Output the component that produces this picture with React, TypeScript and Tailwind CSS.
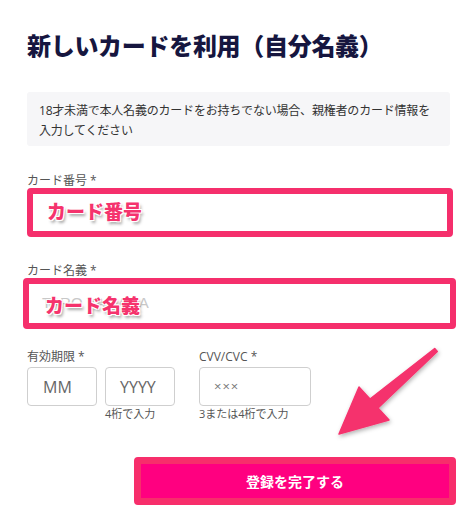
const App = () => {
  const annotation =
    'font-black text-[19px] leading-none text-[#f5336d] [text-shadow:1px_1px_0_#fff,-1px_-1px_0_#fff,1px_-1px_0_#fff,-1px_1px_0_#fff,2px_3px_3px_rgba(0,0,0,0.35)]';

  return (
    <div className="relative w-[472px] h-[515px] bg-white overflow-hidden font-['Open_Sans','Noto_Sans_CJK_JP',sans-serif]">
      <div className="pl-[27px] pr-[16px] pt-[28px]">
        {/* Title */}
        <h1 className="text-[24px] leading-[36px] font-black text-[#16163f] tracking-[-0.3px]">
          新しいカードを利用（自分名義）
        </h1>

        {/* Notice */}
        <div className="mt-[28px] w-[423px] bg-[#f6f6f8] rounded-[3px] pl-[12px] pr-[16px] pt-[9px] pb-[5px]">
          <p className="text-[12px] leading-[20px] text-[#333] tracking-[-0.2px]">
            18才未満で本人名義のカードをお持ちでない場合、親権者のカード情報を入力してください
          </p>
        </div>

        {/* Card number */}
        <p className="mt-[27px] text-[12px] leading-[15px] text-[#555]">カード番号 *</p>
        <div className="flex items-center w-[426px] h-[49px] border-[6px] border-[#f52f6c] rounded-[4px] bg-white pl-[14px]">
          <span className={annotation}>カード番号</span>
        </div>

        {/* Card holder */}
        <p className="mt-[26px] text-[12px] leading-[15px] text-[#555]">カード名義 *</p>
        <div className="relative flex items-center -ml-[4px] w-[433px] h-[51px] border-[6px] border-[#f52f6c] rounded-[4px] bg-white pl-[13px]">
          <span className="text-[15px] text-[#c8c8c8] font-['Liberation_Sans',sans-serif]">
            TARO YAMADA
          </span>
          <span className={`absolute left-[16px] top-[13px] ${annotation}`}>カード名義</span>
        </div>

        {/* Expiry / CVV */}
        <div className="mt-[20px] flex">
          <div className="w-[172px]">
            <p className="text-[12px] leading-[15px] text-[#555]">有効期限 *</p>
            <div className="mt-[3px] flex gap-[8px]">
              <div className="w-[70px] h-[39px] border border-[#cfcfcf] rounded-[4px] flex items-center pl-[15px] text-[16px] text-[#666]">
                MM
              </div>
              <div>
                <div className="w-[70px] h-[39px] border border-[#cfcfcf] rounded-[4px] flex items-center pl-[14px] text-[16px] text-[#666]">
                  YYYY
                </div>
                <p className="mt-[1px] text-[11px] leading-[14px] text-[#555]">4桁で入力</p>
              </div>
            </div>
          </div>
          <div>
            <p className="text-[12px] leading-[15px] text-[#555]">CVV/CVC *</p>
            <div className="mt-[3px] w-[112px] h-[39px] border border-[#cfcfcf] rounded-[4px] flex items-center pl-[14px] text-[13px] text-[#777] tracking-[1px]">
              ×××
            </div>
            <p className="mt-[1px] text-[11px] leading-[14px] text-[#555]">3または4桁で入力</p>
          </div>
        </div>

        {/* Submit */}
        <div className="mt-[36px] flex justify-end">
          <button className="w-[322px] h-[48px] border-[7px] border-[#f72e6b] rounded-[4px] bg-[#ff0080] text-white text-[14px] font-bold">
            登録を完了する
          </button>
        </div>
      </div>

      {/* Arrow annotation */}
      <svg
        className="absolute left-0 top-0 pointer-events-none"
        width="472"
        height="515"
        viewBox="0 0 472 515"
      >
        <defs>
          <filter id="sh" x="-20%" y="-20%" width="140%" height="140%">
            <feDropShadow dx="1" dy="2" stdDeviation="2" floodColor="#000" floodOpacity="0.3" />
          </filter>
        </defs>
        <polygon
          points="339,434 359,387 370,399 434.7,348.5 437.3,351.5 378,408 389,420"
          fill="#f5336d"
          stroke="#f5336d"
          strokeWidth="1.5"
          strokeLinejoin="round"
          filter="url(#sh)"
        />
      </svg>
    </div>
  );
};

export default App;
